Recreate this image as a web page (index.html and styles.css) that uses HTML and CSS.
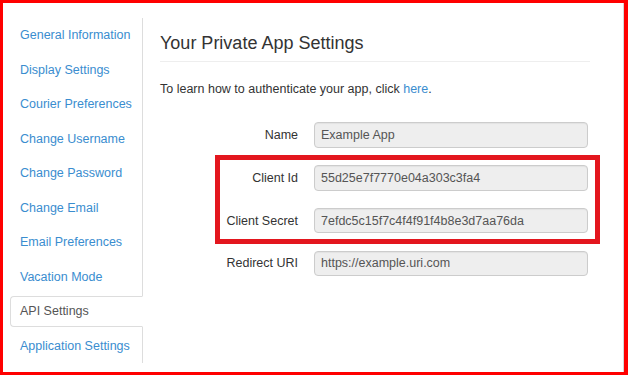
FILE: index.html
```html
<!DOCTYPE html>
<html lang="en">
<head>
    <meta charset="UTF-8">
    <meta name="viewport" content="width=device-width, initial-scale=1.0">
    <title>API Settings</title>
    <link rel="stylesheet" href="styles.css">
</head>
<body>
    <div class="frame">
        <ul class="side-nav">
            <li><a href="#">General Information</a></li>
            <li><a href="#">Display Settings</a></li>
            <li><a href="#">Courier Preferences</a></li>
            <li><a href="#">Change Username</a></li>
            <li><a href="#">Change Password</a></li>
            <li><a href="#">Change Email</a></li>
            <li><a href="#">Email Preferences</a></li>
            <li><a href="#">Vacation Mode</a></li>
            <li class="active"><a href="#">API Settings</a></li>
            <li><a href="#">Application Settings</a></li>
        </ul>
        <div class="content">
            <h3 class="page-title">Your Private App Settings</h3>
            <p class="intro">To learn how to authenticate your app, click <a href="#">here</a>.</p>
            <form class="app-form">
                <label for="app-name">Name</label>
                <input id="app-name" type="text" value="Example App" readonly>
                <label for="client-id">Client Id</label>
                <input id="client-id" type="text" value="55d25e7f7770e04a303c3fa4" readonly>
                <label for="client-secret">Client Secret</label>
                <input id="client-secret" type="text" value="7efdc5c15f7c4f4f91f4b8e3d7aa76da" readonly>
                <label for="redirect-uri">Redirect URI</label>
                <input id="redirect-uri" type="text" value="https://example.uri.com" readonly>
            </form>
        </div>
        <div class="highlight"></div>
    </div>
</body>
</html>
```

FILE: styles.css
```css
body {
    margin: 0;
    font-family: "Liberation Sans", Arial, sans-serif;
    font-size: 12.5px;
    color: #333;
    background-color: #fff;
}
a {
    color: #3a8dcf;
    text-decoration: none;
}
.frame {
    position: relative;
    box-sizing: border-box;
    width: 628px;
    height: 375px;
    border: 3px solid #ff0000;
    border-right-width: 4px;
    box-shadow: inset -1px 0 #d6d6d6;
    display: flex;
    align-items: flex-start;
    padding: 15px 0 0 7px;
}
.side-nav {
    list-style: none;
    margin: 0;
    padding: 0;
    width: 132px;
    border-right: 1px solid #ddd;
}
.side-nav li a {
    display: block;
    padding: 8px 10px;
    line-height: 18.5px;
}
.side-nav li.active a {
    color: #555;
    background-color: #fff;
    border: 1px solid #ddd;
    border-right-color: transparent;
    border-radius: 4px 0 0 4px;
    margin: 1.5px -1px 1.5px 0;
    padding: 7px 10px 7px 9px;
    line-height: 15.5px;
}
.content {
    width: 430px;
    padding-left: 17px;
}
.page-title {
    margin: 16px 0 0;
    font-size: 18px;
    font-weight: normal;
    line-height: 19.8px;
    padding-bottom: 7px;
    border-bottom: 1px solid #eee;
}
.intro {
    margin: 18px 0 0;
    line-height: 18px;
}
.app-form {
    margin-top: 24.5px;
    display: grid;
    grid-template-columns: 138px 274px;
    column-gap: 16px;
    row-gap: 17.3px;
    align-items: center;
}
.app-form label {
    text-align: right;
}
.app-form input {
    box-sizing: border-box;
    height: 25.5px;
    padding: 0 6px;
    font-family: inherit;
    font-size: 12.5px;
    color: #555;
    background-color: #eee;
    border: 1px solid #ccc;
    border-radius: 4px;
    box-shadow: inset 0 1px 1px rgba(0, 0, 0, 0.05);
    outline: none;
}
.highlight {
    position: absolute;
    left: 212px;
    top: 152px;
    width: 385px;
    height: 89px;
    box-sizing: border-box;
    border: 5px solid #e3161e;
    pointer-events: none;
}
```
